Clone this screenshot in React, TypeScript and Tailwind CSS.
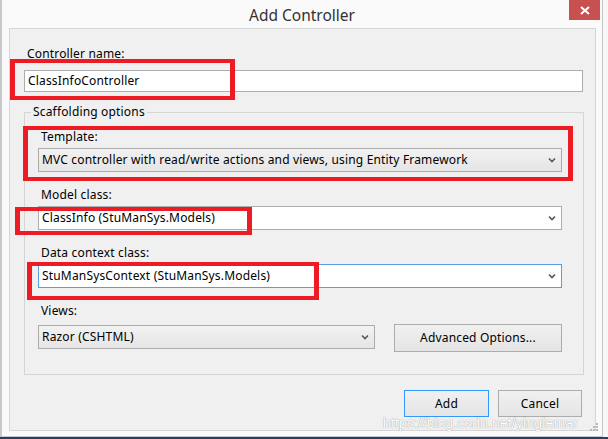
import React from "react";

const Chevron = () => (
  <svg width="8" height="6" viewBox="0 0 8 6" className="shrink-0">
    <polyline points="1,1.5 4,4.5 7,1.5" fill="none" stroke="#555" strokeWidth="1.6" />
  </svg>
);

interface ComboProps {
  text: string;
  variant: "gray" | "white" | "focus";
  className?: string;
}

const Combo: React.FC<ComboProps> = ({ text, variant, className }) => {
  const tone =
    variant === "gray"
      ? "bg-gradient-to-b from-[#f2f2f2] to-[#e5e5e5] border-[#acacac]"
      : variant === "focus"
      ? "bg-white border-[#569de5]"
      : "bg-white border-[#abadb3]";
  return (
    <div className={`flex items-center h-[24px] border pl-[3px] pr-[5px] ${tone} ${className ?? ""}`}>
      <span className="flex-1 truncate text-[#000]">{text}</span>
      <Chevron />
    </div>
  );
};

const RedBox: React.FC<{ className: string }> = ({ className }) => (
  <div className={`absolute border-y-4 border-x-[5px] border-[#ed1c24] pointer-events-none ${className}`} />
);

export default function App() {
  return (
    <div
      className="relative w-[608px] h-[439px] overflow-hidden bg-[#f7f7f7] flex flex-col text-[12px] leading-4 tracking-[0.17px] text-[#000]"
      style={{ fontFamily: '"Noto Sans", "Noto Sans CJK SC", sans-serif' }}
    >
      <div className="flex h-[437px]">
        <div className="w-[603px] h-full border-l-2 border-r border-b border-[#c8c8c8] bg-[#fafafa] flex flex-col">
          {/* title bar */}
          <div className="relative h-[28px] flex items-center justify-center">
            <span className="text-[15.5px] text-[#333] leading-5 pt-[1px] tracking-normal">Add Controller</span>
            <div className="absolute right-[2px] top-0 w-[31px] h-[20px] bg-[#c75050] flex items-center justify-center">
              <svg width="10" height="9" viewBox="0 0 10 9">
                <path d="M1 1 L9 8 M9 1 L1 8" stroke="#fff" strokeWidth="2" />
              </svg>
            </div>
          </div>

          {/* content panel */}
          <div className="ml-[7px] w-[587px] h-[403px] border border-[#d5d5d5] bg-[#f0f0f0] flex flex-col">
            <div className="pl-[17px] pt-[17px]">Controller name:</div>
            <div className="ml-[14px] mt-2 w-[559px] h-[22px] border border-[#abadb3] bg-white pl-[3px] flex items-center">
              ClassInfoController
            </div>

            {/* scaffolding group */}
            <div className="relative ml-[14px] mt-[20px] w-[560px] h-[263px] border border-[#d5d5d5] flex flex-col">
              <span className="absolute -top-[9px] left-[6px] px-[2px] bg-[#f0f0f0]">Scaffolding options</span>
              <div className="pl-[16px] pt-[16px]">Template:</div>
              <Combo
                variant="gray"
                className="ml-[13px] mt-[3px] w-[524px]"
                text="MVC controller with read/write actions and views, using Entity Framework"
              />
              <div className="pl-[16px] mt-[15px]">Model class:</div>
              <Combo variant="white" className="ml-[13px] mt-[3px] w-[524px]" text="ClassInfo (StuManSys.Models)" />
              <div className="pl-[16px] mt-[15px]">Data context class:</div>
              <Combo
                variant="focus"
                className="ml-[13px] mt-[3px] w-[524px]"
                text="StuManSysContext (StuManSys.Models)"
              />
              <div className="pl-[16px] mt-[15px]">Views:</div>
              <div className="flex items-start ml-[13px] mt-[5px]">
                <Combo variant="gray" className="w-[337px] mt-[1px]" text="Razor (CSHTML)" />
                <button className="ml-[19px] w-[168px] h-[28px] border border-[#acacac] bg-gradient-to-b from-[#f0f0f0] to-[#e5e5e5] text-center">
                  Advanced Options...
                </button>
              </div>
            </div>

            {/* dialog buttons */}
            <div className="flex justify-end gap-[9px] mt-[15px] mr-[13px]">
              <button className="w-[85px] h-[27px] border border-[#3399ff] bg-gradient-to-b from-[#f0f0f0] to-[#e5e5e5]">
                Add
              </button>
              <button className="w-[84px] h-[27px] border border-[#acacac] bg-gradient-to-b from-[#f0f0f0] to-[#e5e5e5]">
                Cancel
              </button>
            </div>
          </div>
        </div>
        <div className="flex-1" />
      </div>
      <div className="h-[2px] bg-[#2b3d5c]" />

      {/* annotations */}
      <RedBox className="left-[10px] top-[59px] w-[225px] h-[41px]" />
      <RedBox className="left-[23px] top-[126px] w-[550px] h-[55px]" />
      <RedBox className="left-[15px] top-[207px] w-[237px] h-[28px]" />
      <RedBox className="left-[27px] top-[262px] w-[292px] h-[38px]" />

      {/* resize grip */}
      <svg className="absolute left-[590px] top-[423px]" width="9" height="9" viewBox="0 0 9 9">
        <rect x="6" y="0" width="2" height="2" fill="#b8b8b8" />
        <rect x="3" y="3" width="2" height="2" fill="#b8b8b8" />
        <rect x="6" y="3" width="2" height="2" fill="#b8b8b8" />
        <rect x="0" y="6" width="2" height="2" fill="#b8b8b8" />
        <rect x="3" y="6" width="2" height="2" fill="#b8b8b8" />
        <rect x="6" y="6" width="2" height="2" fill="#b8b8b8" />
      </svg>

      {/* watermark */}
      <div
        className="absolute left-[383px] top-[413px] text-[14px] leading-5 text-white [text-shadow:0_0_1px_rgba(0,0,0,0.5)]"
        style={{ fontFamily: '"Liberation Sans", sans-serif' }}
      >
        https://blog.csdn.net/yinglemar
      </div>
    </div>
  );
}
